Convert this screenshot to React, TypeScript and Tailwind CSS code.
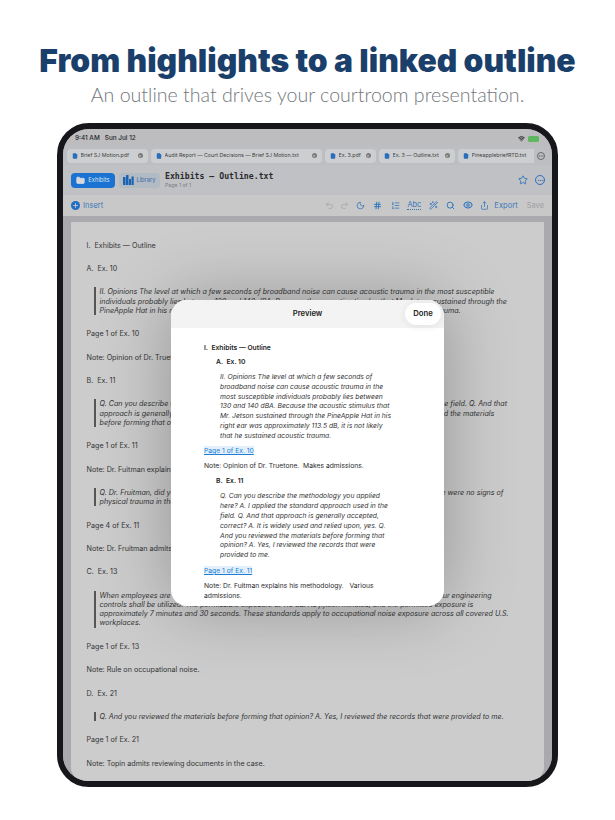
import * as React from 'react';
import {
  Undo2,
  Redo2,
  Moon,
  Hash,
  ListOrdered,
  WandSparkles,
  Search,
  Eye,
  Share,
  Star,
  Ellipsis,
  Plus,
  Wifi,
  Folder,
  X,
  File,
} from 'lucide-react';

const tabs = [
  { name: 'Brief SJ Motion.pdf', w: 'w-[81px]' },
  { name: 'Audit Report — Court Decisions — Brief SJ Motion.txt', w: 'w-[171px]' },
  { name: 'Ex. 3.pdf', w: 'w-[51px]' },
  { name: 'Ex. 3 — Outline.txt', w: 'w-[76px]' },
];

const Tab = ({ name, w }: { name: string; w: string }) => (
  <div className={`${w} h-[14px] shrink-0 flex items-center gap-[2.5px] px-[5px] rounded-[4px] bg-[#cdced0]`}>
    <File size={6} className="shrink-0 text-[#2a6fbd] fill-[#2a6fbd]" />
    <span className="flex-1 overflow-hidden whitespace-nowrap text-[5.3px] text-[#3f4144]">{name}</span>
    <span className="shrink-0 w-[5.5px] h-[5.5px] rounded-full bg-[#77797c] flex items-center justify-center">
      <X size={4} strokeWidth={3} className="text-[#cdced0]" />
    </span>
  </div>
);

const Row = ({ children }: { children: React.ReactNode }) => (
  <p className="h-[23.4px] leading-[23.4px] whitespace-nowrap">{children}</p>
);

const Quote = ({ lines }: { lines: string[] }) => (
  <div className="flex gap-[3.5px] my-[7.2px] ml-[7.5px]">
    <div className="w-[2px] bg-[#55565a] shrink-0" />
    <div className="italic leading-[9.15px] whitespace-nowrap text-[#333436]">
      {lines.map((l) => (
        <p key={l}>{l}</p>
      ))}
    </div>
  </div>
);

const PreviewQuote = ({ lines }: { lines: string[] }) => (
  <div className="ml-[16px] italic leading-[9.78px] whitespace-nowrap text-[#333]">
    {lines.map((l) => (
      <p key={l}>{l}</p>
    ))}
  </div>
);

const PreviewModal = () => (
  <div className="absolute left-[108px] top-[171px] w-[273px] h-[306px] rounded-[16px] bg-white overflow-hidden shadow-[0_0_70px_rgba(0,0,0,0.28)] text-[6.75px] text-[#2b2b2b]">
    <div className="h-[28px] bg-[#f2f3f2] flex items-center justify-center relative">
      <span className="text-[7.7px] font-semibold text-[#222]">Preview</span>
      <span className="absolute right-[3px] top-[3px] w-[36px] h-[22px] rounded-full bg-white flex items-center justify-center text-[7.7px] font-semibold text-[#222] shadow-[0_1px_8px_rgba(0,0,0,0.08)]">
        Done
      </span>
    </div>
    <div className="pl-[33px] pt-[15px]">
      <p className="font-semibold leading-[10px] text-[#222]">I.&nbsp; Exhibits — Outline</p>
      <p className="ml-[12px] mt-[3.5px] mb-[5.5px] font-semibold leading-[10px] text-[#222]">A.&nbsp; Ex. 10</p>
      <PreviewQuote
        lines={[
          'II. Opinions The level at which a few seconds of',
          'broadband noise can cause acoustic trauma in the',
          'most susceptible individuals probably lies between',
          '130 and 140 dBA. Because the acoustic stimulus that',
          'Mr. Jetson sustained through the PineApple Hat in his',
          'right ear was approximately 113.5 dB, it is not likely',
          'that he sustained acoustic trauma.',
        ]}
      />
      <p className="mt-[6px] leading-[10px]">
        <span className="text-[#1f7fd6] underline bg-[#e3f0fb]">Page 1 of Ex. 10</span>
      </p>
      <p className="mt-[5px] leading-[10px]">Note: Opinion of Dr. Truetone.&nbsp; Makes admissions.</p>
      <p className="ml-[12px] mt-[5px] mb-[5px] font-semibold leading-[10px] text-[#222]">B.&nbsp; Ex. 11</p>
      <PreviewQuote
        lines={[
          'Q. Can you describe the methodology you applied',
          'here? A. I applied the standard approach used in the',
          'field. Q. And that approach is generally accepted,',
          'correct? A. It is widely used and relied upon, yes. Q.',
          'And you reviewed the materials before forming that',
          'opinion? A. Yes, I reviewed the records that were',
          'provided to me.',
        ]}
      />
      <p className="mt-[6px] leading-[10px]">
        <span className="text-[#1f7fd6] underline bg-[#e3f0fb]">Page 1 of Ex. 11</span>
      </p>
      <p className="mt-[5px] leading-[9.8px]">
        Note: Dr. Fuitman explains his methodology.&nbsp;&nbsp; Various
        <br />
        admissions.
      </p>
    </div>
  </div>
);

export default function App() {
  return (
    <div className="w-[615px] h-[820px] bg-white overflow-hidden flex flex-col items-center font-['Inter',sans-serif]">
      <h1 className="mt-[40px] h-[42px] leading-[42px] text-[31.8px] font-black text-[#1b3f6b] whitespace-nowrap">
        From highlights to a linked outline
      </h1>
      <p className="h-[26px] leading-[26px] text-[19.6px] font-light text-[#74777c] whitespace-nowrap font-['Lato',sans-serif]">
        An outline that drives your courtroom presentation.
      </p>

      <div className="mt-[15px] w-[501px] h-[664px] rounded-[32px] border-[6px] border-[#17171b] overflow-hidden relative bg-[#a9a9ae] flex flex-col">
        {/* status bar */}
        <div className="h-[17px] bg-[#bdbdbf] flex items-center justify-between pl-[12px] pr-[13px] pt-[2px]">
          <span className="text-[6.4px] font-medium text-[#26272a]">9:41 AM&nbsp;&nbsp; Sun Jul 12</span>
          <div className="flex items-center gap-[3px]">
            <Wifi size={7} strokeWidth={3} className="text-[#222]" />
            <div className="w-[11px] h-[6px] rounded-[1.5px] bg-[#5fb85f]" />
          </div>
        </div>

        {/* tabs */}
        <div className="h-[19px] bg-[#bdbec1] flex items-center gap-[3px] pl-[4px] overflow-hidden">
          {tabs.map((t) => (
            <Tab key={t.name} name={t.name} w={t.w} />
          ))}
          <div className="w-[76px] h-[14px] shrink-0 flex items-center gap-[2.5px] pl-[5px] rounded-l-[4px] bg-[#cdced0]">
            <File size={6} className="shrink-0 text-[#2a6fbd] fill-[#2a6fbd]" />
            <span className="flex-1 overflow-hidden whitespace-nowrap text-[5.3px] text-[#3f4144]">PineapplebriefRTD.txt</span>
          </div>
          <div className="w-[8px] h-[8px] shrink-0 rounded-full border-[0.7px] border-[#66686b] flex items-center justify-center">
            <Ellipsis size={6} className="text-[#66686b]" />
          </div>
        </div>

        {/* title bar */}
        <div className="h-[30px] bg-[#c0c1c5] flex items-center pl-[8px] pr-[7px]">
          <div className="w-[44px] h-[15px] rounded-[4px] bg-[#1a73d2] flex items-center justify-center gap-[3px]">
            <Folder size={9} className="text-[#d5d8dc] fill-[#d5d8dc]" />
            <span className="text-[5.8px] text-[#d5e2f0]">Exhibits</span>
          </div>
          <div className="ml-[4px] w-[41px] h-[15px] rounded-[4px] bg-[#b2bac4] flex items-center justify-center gap-[2px]">
            <svg width="11" height="10" viewBox="0 0 11 10" className="text-[#1a63b0]" fill="currentColor">
              <rect x="0" y="2" width="2.5" height="8" />
              <rect x="3" y="0" width="2.5" height="10" />
              <rect x="6" y="4" width="2" height="6" />
              <rect x="8.5" y="1.5" width="2.2" height="8.5" />
            </svg>
            <span className="text-[5.8px] text-[#3c6fa8]">Library</span>
          </div>
          <div className="ml-[5px] flex flex-col">
            <span className="font-['DejaVu_Sans_Mono',monospace] text-[8.2px] leading-[11px] font-bold text-[#2a2b2d] whitespace-nowrap">
              Exhibits — Outline.txt
            </span>
            <span className="text-[5.2px] leading-[7px] text-[#7a7b7e]">Page 1 of 1</span>
          </div>
          <div className="ml-auto flex items-center gap-[7px]">
            <Star size={10} className="text-[#2a6fbd]" />
            <div className="w-[10px] h-[10px] rounded-full border border-[#2a6fbd] flex items-center justify-center">
              <Ellipsis size={7} className="text-[#2a6fbd]" />
            </div>
          </div>
        </div>

        {/* insert bar */}
        <div className="h-[21px] bg-[#c8c8c9] flex items-center pl-[8px] pr-[8px] text-[#2f74bb]">
          <span className="w-[9px] h-[9px] rounded-full bg-[#1f6fc4] flex items-center justify-center">
            <Plus size={7} strokeWidth={3} className="text-[#c8c8c9]" />
          </span>
          <span className="ml-[3px] text-[7.5px] text-[#3a78b8]">Insert</span>
          <div className="ml-auto flex items-center">
            <Undo2 size={9} className="text-[#a3a4a6]" />
            <Redo2 size={9} className="ml-[6px] text-[#a3a4a6]" />
            <Moon size={9} className="ml-[7px]" />
            <Hash size={9} className="ml-[8px]" strokeWidth={2.5} />
            <ListOrdered size={9} className="ml-[9px]" />
            <span className="ml-[7px] text-[7.4px] leading-[9px] border-b border-dotted border-[#2f74bb]">Abc</span>
            <WandSparkles size={9} className="ml-[8px]" />
            <Search size={9} className="ml-[8px]" strokeWidth={2.5} />
            <Eye size={10} className="ml-[8px]" strokeWidth={2.5} />
            <Share size={9} className="ml-[7px]" />
            <span className="ml-[5px] text-[7.6px] text-[#3a78b8]">Export</span>
            <span className="ml-[9px] text-[7.4px] font-medium text-[#a3a4a6]">Save</span>
          </div>
        </div>

        {/* document */}
        <div className="flex-1 min-h-0 pt-[6px] px-[8px] bg-[#a9a9ae]">
          <div className="h-full bg-[#cccccc] pl-[15.5px] pt-[11.5px] overflow-hidden rounded-b-[14px] text-[7.15px] text-[#333436]">
            <Row>I.&nbsp; Exhibits — Outline</Row>
            <Row>A.&nbsp; Ex. 10</Row>
            <Quote
              lines={[
                'II. Opinions The level at which a few seconds of broadband noise can cause acoustic trauma in the most susceptible',
                'individuals probably lies between 130 and 140 dBA. Because the acoustic stimulus that Mr. Jetson sustained through the',
                'PineApple Hat in his right ear was approximately 113.5 dB, it is not likely that he sustained acoustic trauma.',
              ]}
            />
            <Row>Page 1 of Ex. 10</Row>
            <Row>Note: Opinion of Dr. Truetone.&nbsp; Makes admissions.</Row>
            <Row>B.&nbsp; Ex. 11</Row>
            <Quote
              lines={[
                'Q. Can you describe the methodology you applied here? A. I applied the standard approach used in the field. Q. And that',
                'approach is generally accepted, correct? A. It is widely used and relied upon, yes. Q. And you reviewed the materials',
                'before forming that opinion? A. Yes, I reviewed the records that were provided to me.',
              ]}
            />
            <Row>Page 1 of Ex. 11</Row>
            <Row>Note: Dr. Fuitman explains his methodology.&nbsp;&nbsp; Various admissions.</Row>
            <Quote
              lines={[
                'Q. Dr. Fruitman, did you observe any physical injury to the ear during your examination, and then there were no signs of',
                'physical trauma in the records that you reviewed?',
              ]}
            />
            <Row>Page 4 of Ex. 11</Row>
            <Row>Note: Dr. Fruitman admits no signs of trauma.</Row>
            <Row>C.&nbsp; Ex. 13</Row>
            <Quote
              lines={[
                'When employees are subjected to sound exceeding the permissible limits, feasible administrative or our engineering',
                'controls shall be utilized. The permissible exposure at 115 dBA is fifteen minutes, and the permitted exposure is',
                'approximately 7 minutes and 30 seconds. These standards apply to occupational noise exposure across all covered U.S.',
                'workplaces.',
              ]}
            />
            <Row>Page 1 of Ex. 13</Row>
            <Row>Note: Rule on occupational noise.</Row>
            <Row>D.&nbsp; Ex. 21</Row>
            <Quote lines={['Q. And you reviewed the materials before forming that opinion? A. Yes, I reviewed the records that were provided to me.']} />
            <Row>Page 1 of Ex. 21</Row>
            <Row>Note: Topin admits reviewing documents in the case.</Row>
          </div>
        </div>

        <PreviewModal />
      </div>
    </div>
  );
}
